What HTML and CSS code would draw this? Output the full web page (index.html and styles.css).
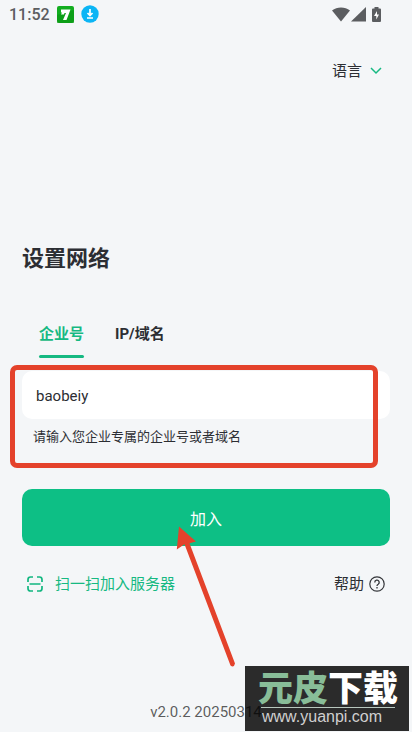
FILE: index.html
```html
<!DOCTYPE html>
<html lang="zh-CN">
<head>
<meta charset="utf-8">
<meta name="viewport" content="width=device-width, initial-scale=1">
<title>设置网络</title>
<link rel="stylesheet" href="styles.css">
</head>
<body>
<header class="status">
  <div class="status-group">
    <span class="clock">11:52</span>
    <svg class="app-icon" width="17" height="17" viewBox="0 0 17 17" aria-hidden="true"><rect width="17" height="17" rx="2" fill="#12ad20"/><path d="M0 9 17 4v13H0Z" fill="#07910f" opacity=".5"/><path d="M4 3.500h9.500L9.500 14H6l3-7H7.500L7 8.500H4l1-2H4Z" fill="#fff"/></svg>
    <svg class="app-icon" width="18" height="18" viewBox="0 0 18 18" aria-hidden="true"><circle cx="9" cy="9" r="8.700" fill="#0bb5f5"/><path d="M9 4v6M6.500 8 9 10.500 11.500 8M6 13h6" fill="none" stroke="#fff" stroke-width="1.700"/></svg>
  </div>
  <div class="status-group status-right">
    <svg width="18" height="15" viewBox="0 0 18 15" aria-hidden="true"><path d="M0 3.500C5-.500 13-.500 18 3.500L9 14.500Z" fill="#5b5d60"/></svg>
    <svg width="15" height="15" viewBox="0 0 15 15" aria-hidden="true"><path d="M15 0v14.500H0Z" fill="#5b5d60"/></svg>
    <svg class="battery" width="9" height="15" viewBox="0 0 9 15" aria-hidden="true"><path d="M2.500 0h4v1.500H8q1 0 1 1V14q0 1-1 1H1q-1 0-1-1V2.500q0-1 1-1h1.500Z" fill="#5b5d60"/><path d="M5 4 2 9h2.300v3.500L7 7.500H5Z" fill="#fff"/></svg>
  </div>
</header>
<main class="page">
  <div class="language-row">
    <button class="language" type="button">语言
      <svg width="12" height="8" viewBox="0 0 12 8" aria-hidden="true"><path d="m1 1 5 5 5-5" fill="none" stroke="#16b982" stroke-width="1.500"/></svg>
    </button>
  </div>
  <h1>设置网络</h1>
  <div class="tabs" role="tablist">
    <button class="tab active" type="button" role="tab" aria-selected="true">企业号</button>
    <button class="tab" type="button" role="tab" aria-selected="false">IP/域名</button>
  </div>
  <form class="join">
    <div class="field">
      <input id="company" type="text" value="baobeiy">
      <label for="company">请输入您企业专属的企业号或者域名</label>
      <div class="highlight"></div>
    </div>
    <div class="submit-area">
      <button class="submit" type="button">加入</button>
      <svg class="arrow" width="60" height="142" viewBox="0 0 60 142" aria-hidden="true"><path d="M3 .500 20 15.500 13.500 17.200 59 137.500Q58 142 54.500 139.500L8.500 18.200 .800 23.500Z" fill="#e4422b"/></svg>
    </div>
  </form>
  <div class="links">
    <a class="scan" href="#">
      <svg width="16" height="16" viewBox="0 0 16 16" aria-hidden="true"><path d="M1 6V3.500Q1 1 3.500 1H6M10 1h2.500Q15 1 15 3.500V6M15 10v2.500q0 2.500-2.500 2.500H10M6 15H3.500Q1 15 1 12.500V10M2.500 8h11" fill="none" stroke="#12b780" stroke-width="1.700"/></svg>
      扫一扫加入服务器</a>
    <a class="help" href="#">帮助
      <svg width="16" height="16" viewBox="0 0 16 16" aria-hidden="true"><circle cx="8" cy="8" r="7.200" fill="none" stroke="#333539" stroke-width="1.200"/><path d="M5.800 6.500a2.200 2.200 0 1 1 3.400 1.700Q8 8.900 8 9.900M8 11v1.500" fill="none" stroke="#333539" stroke-width="1.300"/></svg>
    </a>
  </div>
</main>
<footer class="footer">
  <span class="version">v2.0.2 20250314</span>
  <div class="watermark">
    <div class="brand"><span class="brand-green">元皮</span><span>下载</span></div>
    <div class="site">www.yuanpi.com</div>
  </div>
</footer>
</body>
</html>
```
FILE: styles.css
```css
* {
  box-sizing: border-box;
}

body {
  margin: 0;
  min-height: 100vh;
  display: flex;
  flex-direction: column;
  background: #f4f6f8;
  color: #2c2e33;
  font-family: Roboto, "Noto Sans CJK SC", sans-serif;
  font-size: 15px;
}

svg {
  display: block;
  flex: none;
}

button,
input {
  font: inherit;
  color: inherit;
  border: 0;
  padding: 0;
  background: none;
}

a {
  color: inherit;
  text-decoration: none;
}

.status {
  display: flex;
  justify-content: space-between;
  align-items: center;
  height: 28px;
  padding: 0 31px 0 9px;
}

.status-group {
  display: flex;
  align-items: center;
  gap: 7px;
}

.status-right {
  gap: 1px;
}

.battery {
  margin-left: 5px;
}

.clock {
  color: #5b5d60;
  font-size: 16px;
  font-weight: 500;
}

.page {
  padding: 0 22px;
}

.language-row {
  display: flex;
  justify-content: flex-end;
  padding: 31px 8px 0 0;
}

.language {
  display: flex;
  align-items: center;
  gap: 8px;
  line-height: 24px;
}

h1 {
  margin: 160px 0 0;
  font-size: 22px;
  font-weight: 700;
  line-height: 32px;
}

.tabs {
  display: flex;
  gap: 31px;
  padding: 45px 17px 0;
}

.tab {
  height: 38px;
  padding-bottom: 11px;
  font-weight: 700;
  line-height: 24px;
}

.tab.active {
  position: relative;
  color: #16b982;
}

.tab.active::after {
  content: "";
  position: absolute;
  right: 0;
  bottom: 0;
  left: 0;
  height: 3px;
  border-radius: 2px;
  background: #16b982;
}

.field {
  position: relative;
  height: 103px;
  margin-top: 7px;
  padding-top: 6px;
}

.field input {
  display: block;
  width: 100%;
  height: 48px;
  padding: 1px 14px 0;
  border-radius: 10px;
  background: #fff;
  outline: 0;
}

.field label {
  display: block;
  padding: 8px 11px 0;
  font-size: 13px;
  line-height: 20px;
}

.highlight {
  position: absolute;
  top: 0;
  right: 12px;
  bottom: 0;
  left: -12px;
  border: 5px solid #e4422b;
  border-radius: 7px;
  pointer-events: none;
}

.submit-area {
  position: relative;
  margin-top: 21px;
}

.submit {
  display: block;
  width: 100%;
  height: 57px;
  border-radius: 10px;
  background: #0dbf85;
  color: #fff;
  font-size: 16px;
}

.arrow {
  position: absolute;
  top: 37px;
  left: calc(50% - 30px);
  z-index: 1;
  pointer-events: none;
}

.links {
  display: flex;
  justify-content: space-between;
  padding: 26px 5px 0;
  line-height: 24px;
}

.links a {
  display: flex;
  align-items: center;
}

.scan {
  gap: 12px;
  color: #16b982;
}

.help {
  gap: 5px;
}

.footer {
  position: relative;
  display: flex;
  justify-content: center;
  margin-top: auto;
  padding-bottom: 10px;
  line-height: 20px;
}

.version {
  position: relative;
  z-index: 1;
  color: rgba(0, 0, 0, 0.65);
}

.watermark {
  position: absolute;
  right: 3px;
  bottom: 1px;
  width: 164px;
  height: 65px;
  padding: 6px 14px 0 16px;
  background: #2b2b2b;
  color: #fff;
}

.brand {
  display: flex;
  justify-content: center;
  height: 36px;
  border-bottom: 1px solid #b8c7be;
  font-size: 35px;
  font-weight: 900;
  line-height: 36px;
  white-space: nowrap;
}

.brand-green {
  color: #88bd98;
}

.site {
  padding-left: 1px;
  color: #d0d0d0;
  font-family: "Liberation Sans", sans-serif;
  font-size: 16px;
  line-height: 18px;
}
```
